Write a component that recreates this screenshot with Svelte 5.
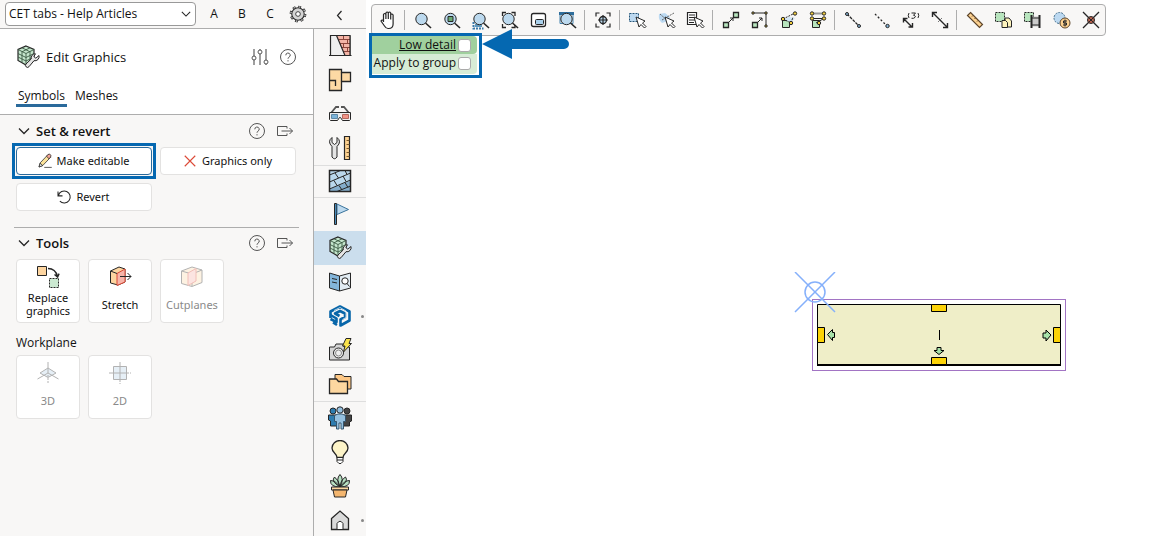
<script lang="ts">
	type RailItem = { icon: string; label: string; dot?: boolean };

	let lowDetail = $state(false);
	let applyToGroup = $state(false);
	let activeRail = $state('edit');

	const magnifier =
		'<path d="M14.500 15l5.500 5" stroke-width="1.600"/><circle cx="10.500" cy="11" r="5.700" fill="#bcd9ee"/>';
	const cursor =
		'<path d="M10 9l3 10 2-2.500 3.500 3.500 1.500-1.500-3.500-3.500 2.500-2z" fill="#fff"/>';

	const icons: Record<string, string> = {
		cog: '<circle cx="12" cy="12" r="8.500" stroke-width="3" stroke-dasharray="3.400 3.275"/><circle cx="12" cy="12" r="7.500" fill="#d4d4d4" stroke-width="1.300"/><circle cx="12" cy="12" r="8.600" stroke="#d4d4d4" stroke-width="1.400" stroke-dasharray="1.800 4.950" stroke-dashoffset="-.8"/><circle cx="12" cy="12" r="2.800" fill="#fff"/>',
		cube: '<path d="M10 1l8 3.500v11L10 20l-8-4.500v-11z" fill="#c5e6cd" stroke-width="1.200"/><path d="M2 4.500l8 4 8-4M10 8.500V20M6 2.800l8 4M14 2.800l-8 4M2 8.500l8 4 8-4M2 12l8 4 8-4M6 6.500v11M14 6.500v11" stroke="#3b5a43" stroke-width=".9"/><path d="M23 10.500a4.200 4.200 0 0 1-5 5.200l-5 6a2 2 0 0 1-3-2.700l5.200-5a4.200 4.200 0 0 1 4.300-5.200l-1.700 2.700 2 1.700z" fill="#e6e6e6"/>',
		sliders:
			'<path d="M6 4v16M12 4v16M18 4v16" stroke="#777" stroke-width="1.400"/><circle cx="6" cy="13" r="2" fill="#fff"/><circle cx="12" cy="7" r="2" fill="#fff"/><circle cx="18" cy="17" r="2" fill="#fff"/>',
		help: '<circle cx="12" cy="12" r="7.500"/><path d="M9.800 10.300a2.200 2.200 0 1 1 3.200 1.900c-.7.400-1 .8-1 1.500M12 15.200v1.200"/>',
		detach: '<path d="M14 9.500V7.500H4.500v9h9.500v-2M8.500 12h11M16.500 9l3 3-3 3"/>',
		chevron: '<path d="M7 9.500l5 5 5-5" stroke-width="1.300"/>',
		back: '<path d="M14.500 9l-4 4.500 4 4.500" stroke-width="1.200"/>',
		pencil:
			'<path d="M4 20l1.500-5.500L16 3.500l3.500 3.500L9 18z" fill="#fae29a"/><path d="M14 5.500l2-2q1.500-1.500 3.200 0t0 3.500l-2 2z" fill="#f3a597"/><path d="M4 20l1.500-5 3.500 3z" fill="#eee"/><path d="M11 20.500h10"/>',
		cross: '<path d="M5 5l14 14M19 5L5 19" stroke="#dc4a38" stroke-width="1.500"/>',
		revert: '<path d="M4 4.500v6h6M4.500 10a8 8 0 1 1 2 7.500" stroke-width="1.400"/>',
		replace:
			'<path d="M1.500 1.500h9v9h-9z" fill="#fdd5a0"/><path d="M13.500 13.500h9v9h-9z" fill="#cbe9d1" stroke-dasharray="2 1"/><path d="M12 3.500q7.500 0 9.500 8M18.500 9.500l3.100 2.600 1.500-3.500" stroke-width="1.400"/>',
		stretch:
			'<path d="M2.500 6L11 2l6 2v13l-7 3-7.500-2z" fill="#fdd5a0"/><path d="M9 8.500L17 4v13l-8 3.500z" fill="#f7b5aa" stroke="#d94834"/><path d="M2.500 6L9 8.500M12 11.500h11M19.500 8l3.500 3.500-3.500 3.500"/>',
		cutplanes:
			'<path d="M1.500 6L12 2l10 3v12.500L12 21.500l-10.500-3z" fill="#fbdcae"/><path d="M1.500 6l10.500 3 10-4M12 9v12"/><path d="M8 8l8-4.500V16l-8 4.500z" fill="#f7b5aa" stroke="#d94834"/>',
		plane3d:
			'<path d="M4 12l8-5 8 5-8 4.500z" fill="#b8d3e8"/><path d="M12 1v11M1.500 18L12 12l10.500 6"/><path d="M12 14v9" stroke-dasharray="2 1"/>',
		plane2d:
			'<path d="M5.500 5.500h13v13h-13z" fill="#b8d3e8"/><path d="M12 1v22M1 12h22" stroke-dasharray="17 1 2 1"/>',
		wall: '<path d="M2.500 1.500H22V21.500H2.500z" fill="#eee"/><path d="M8.500 1.500H22V21.500h-5z" fill="#f4b5a7" stroke="none"/><path d="M10.500 5.500H22M12 9.500h10M13.500 13.500H22M15.500 17.500H22M15.500 1.500v4M19.500 5.500v4M15.500 9.500v4M19.500 13.500v4" stroke="#8c453b"/><path d="M2.500 21.500v-20H22v20M8.500 1.500l8.500 20M1 21.500h22.500" stroke-width="1.200"/>',
		sofa: '<path d="M1.500 1.500h12v3h9v9h-9v9h-12z" fill="#fdd9a4" stroke-width="1.300"/><path d="M13.500 4.500v9M1.500 12.500h6V18" stroke-width="1.300"/>',
		glasses:
			'<path d="M3 11l5-6h3M21 11l-5-6h-3" stroke="#555" stroke-width="1.800"/><path d="M1.500 10.500h21v7l-1 1h-7l-2-3h-1l-2 3h-7l-1-1z" fill="#eee"/><path d="M3.500 12.500h6v4h-6z" fill="#7cb3d8" stroke="#5c87a5"/><path d="M14.500 12.500h6v4h-6z" fill="#f19488" stroke="#b3685e"/>',
		tools:
			'<path d="M4 1.500v5l2.500 2 2.500-2v-5q5 4 0 9V21q-2.500 3.500-5 0V10.500q-5-5 0-9z" fill="#e4e4e4"/><path d="M16.500 .5h5v23h-5z" fill="#fdd291" stroke-width="1.200"/><path d="M21.500 4.500h-3M21.500 8.500h-3M21.500 12.500h-3M21.500 16.500h-3M21.500 20.500h-3" stroke="#7b5a2c"/>',
		paving:
			'<path d="M1.500 1.500h21v21h-21z" fill="#bad8ed"/><path d="M2 20l20-8v10H2z" fill="#83accb" stroke="none"/><path d="M1.500 6l11-4.500M1.500 13l21-9M1.500 20l21-9M9 22.500l13.500-5.500M7 4l3.500 5M15 7l3 5.500M6 11.500l3 5M17 13.500l3 5M11 16.500l3 4.500M17 1.500l2 4"/><path d="M1.500 1.500h21v21h-21z" stroke-width="1.500"/>',
		flag: '<path d="M6.500 1.500h2v21h-2z" fill="#4889b7"/><path d="M9 2l11.500 5.500L9 12.500z" fill="#bcd9ee" stroke="#39739c"/>',
		catalog:
			'<path d="M1.500 3l10 3v15l-10-3z" fill="#83b5da"/><path d="M11.500 6l11-3v15l-11 3z" fill="#e2ecf3"/><path d="M4 8.500l5 1M4 12l5 1"/><circle cx="17" cy="11" r="3.200" fill="#fff"/><path d="M19 13.500l2.500 3"/>',
		sketch:
			'<g stroke="#0866a9" stroke-width="2.600" stroke-linejoin="round"><path d="M2.500 14V7.500L12 2.500l9.500 5v9L12.500 21.500v-6l4.500-2.500V9.500L12 7 7 9.500l4.500 2.500"/><path d="M2.500 11l6 3.500v3.500L2.500 15M5 18.500l4 2.500"/></g><path d="M6 6.500l6-3 6 3.500v6.500l-3.500 2" stroke="#fff" stroke-width=".7"/>',
		camera:
			'<path d="M1.500 9h5l1.500-3h7l1 3h5.500v13h-20z" fill="#d5d5d5"/><circle cx="10.500" cy="15" r="5" fill="#eee"/><circle cx="10.500" cy="15" r="3" stroke="#888"/><path d="M18 .5h5l-2 5h2.500l-8 8.500 1.500-6h-2.500z" fill="#fbe34b"/>',
		folders:
			'<path d="M7 7V2.500h7l2 2h7V17h-4" fill="#fdc785"/><path d="M1.500 7h7l2 2.500h9v12h-18z" fill="#fdd7a0" stroke-width="1.300"/>',
		people:
			'<circle cx="5" cy="5" r="3" fill="#2e7caf"/><circle cx="19" cy="5" r="3" fill="#444"/><path d="M.5 9h8v11h-6v-5l-2-1z" fill="#2e7caf"/><path d="M15.500 9h8v6l-2 1v4h-6z" fill="#444"/><circle cx="12" cy="4" r="3.200" fill="#95c0df"/><path d="M6.500 9.500L10 8h4l3.500 1.500v6h-2V23h-2.500v-6h-2v6H8.500v-7.500h-2z" fill="#95c0df" stroke="#35566f"/>',
		bulb: '<path d="M9 17.500c0-4-5-4.500-5-9.500a8 7.500 0 0 1 16 0c0 5-5 5.500-5 9.500z" fill="#fdf4c8" stroke-width="1.300"/><path d="M9 17.500h6v4l-2 2h-2l-2-2zM9 20h6" fill="#fff"/>',
		plant:
			'<path d="M12 13Q2 13 2.500 6.500q5 0 9.500 6.500Q2.500 7 6.500 3q4.500 3 5.500 10-4.500-8 0-12.500Q16.500 5 12 13q.5-7 5.500-10 3.500 4-5.500 10 4.500-6.500 9.500-6.500.5 6.500-9.500 6.500z" fill="#b6dfc1"/><path d="M3.500 13h17v3h-17z" fill="#fdd7a0"/><path d="M5 16h14l-1.500 7h-11z" fill="#f4b66f"/>',
		home: '<path d="M3.500 10.500L12 3l8.500 7.500V21.500h-17z" fill="#dadada" stroke-width="1.300"/><path d="M9 21.500v-6q3-4.500 6 0v6z" fill="#fff"/>',
		hand: '<path d="M7.500 14V6.500q1.200-2 2.400 0V11 5q1.200-2 2.400 0v6V5q1.200-2 2.400 0v6.500V7q1.200-2 2.400 0v9q0 4.500-4.500 4.500H12q-2 0-3.500-2.500L5 13q1-2 2.500 0z" fill="#fff" stroke-width="1.200"/>',
		zoom: magnifier,
		zoomSel: magnifier + '<path d="M8 8.500h5v5H8z" fill="#6bab74"/>',
		zoomArea:
			'<path d="M4.500 14v6.500h10" stroke="#397aaa" stroke-width="2" stroke-dasharray="2 1"/><path d="M6 16h7v3H6z" fill="#5f98be" stroke="none"/>' +
			magnifier,
		zoomFit:
			'<path d="M4.500 8V4.500H8M13.500 4.500H17V8M4.500 16v3.500H8M17 17v2.500h-3.500" stroke-width="1.300"/>' + magnifier,
		window:
			'<rect x="4.500" y="5.500" width="14" height="13" rx="2" stroke-width="1.300" fill="#fff"/><rect x="8.500" y="11.500" width="8" height="5" rx="1" fill="#a9d0eb"/>',
		zoomWindow:
			'<path d="M4 6v9.500h13V6" stroke="#4483af"/><path d="M3 5.500h15" stroke="#2f6e9c" stroke-width="3"/>' +
			magnifier,
		focus:
			'<path d="M5 8.500V5h3.500M15.500 5H19v3.500M19 15.500V19h-3.500M8.500 19H5v-3.500" stroke-width="1.200"/><circle cx="12" cy="12" r="3.500" fill="#b9d6ea" stroke-width="1.300"/><path d="M12 7v10M7 12h10" stroke-width="1.200"/>',
		select: '<path d="M3.500 5.500h9v8h-9z" fill="#bcd9f1" stroke="#24567a" stroke-dasharray="2 1"/>' + cursor,
		lasso:
			'<path d="M4 6l6-1 5 4-2 4-6 2q-4-3-3-9z" fill="#bcd9f1" stroke="none"/><path d="M5 6l9 8M7 12l12-7" stroke-dasharray="2 1" stroke="#666"/>' +
			cursor,
		list: '<path d="M3.500 4.500h9v12h-9z" fill="#fff" stroke-width="1.200"/><path d="M5 7h6M5 9.500h6M5 12h6M5 14.500h5"/>' + cursor,
		scale:
			'<path d="M4.500 14.500h5v5h-5zM14.500 4.500h5v5h-5z" fill="#b8e5be" stroke-width="1.300"/><path d="M10 14l4-4M11 10h3v3"/>',
		scaleLine:
			'<path d="M4.500 14.500h5v5h-5z" fill="#b8e5be" stroke-width="1.300"/><path d="M5 5h13v13M10 14l4-4M11 10h3v3"/><path d="M4 4h2v2H4zM17 4h2v2h-2zM17 17h2v2h-2z" fill="#f2cd3d"/>',
		snap: '<path d="M5.500 12.500h7v7h-7z" fill="#b8e5be"/><path d="M7 11l5-2 6 1-4 5z" fill="#d2e6f4" stroke="none"/><path d="M6 11l12-6M6 11l8 4 2-6" stroke-dasharray="2 1"/><circle cx="6" cy="11" r="1.700" fill="#f2cd3d"/><circle cx="18" cy="5.500" r="1.700" fill="#f2cd3d"/><circle cx="14" cy="15" r="1.700" fill="#f2cd3d"/>',
		snapGroup:
			'<path d="M6.500 12.500h7v7h-7z" fill="#b8e5be"/><path d="M6 5.500h12" stroke="#999" stroke-width="2"/><path d="M6 10.500h12M10 15l7-4"/><circle cx="6" cy="5.500" r="1.700" fill="#f2cd3d"/><circle cx="18" cy="5.500" r="1.700" fill="#f2cd3d"/><circle cx="6" cy="10.500" r="1.700" fill="#f2cd3d"/><circle cx="18" cy="10.500" r="1.700" fill="#f2cd3d"/><circle cx="13" cy="15" r="1.700" fill="#f2cd3d"/>',
		line: '<path d="M6 6l12 12" stroke-width="1.300" stroke-dasharray="3 1"/><circle cx="6" cy="6" r="1.500" fill="#85b4d7"/><circle cx="18" cy="18" r="1.500" fill="#85b4d7"/>',
		ray: '<path d="M5 6l12 12" stroke-width="1.300" stroke-dasharray="2 2"/><circle cx="17.500" cy="18" r="1.700" fill="#85b4d7"/>',
		measure3:
			'<path d="M5 11l8 8M4.500 14.500V10.500h4M13.500 15v4h-4" stroke-width="1.400"/><path d="M10 5q-1.500 2.500 0 5M19 5q1.500 2.500 0 5M12.500 5h4l-2 2.300q4 1 0 3h-2"/>',
		measure:
			'<path d="M5 5l14 14M4.500 9V4.500H9M19.500 15v4.500H15" stroke-width="1.400"/><path d="M10 14l4-4" stroke="#777"/>',
		ruler:
			'<path d="M7.500 4.500l12 12-3 3-12-12z" fill="#fdd291" stroke="#5d452a" stroke-width="1.200"/><path d="M10 7.500l-1 1M12.500 10l-1 1M15 12.500l-1 1" stroke="#5d452a"/>',
		copyPage:
			'<path d="M3.500 4.500h9v9h-9z" fill="#b8e5be" stroke-dasharray="2 1"/><path d="M13 10h4l2.500 3v6H13z" fill="#fdf3bc"/><path d="M10 12.500h3.500l2 2v5H10z" fill="#fdf3bc"/>',
		film: '<path d="M3.500 4.500h9v9h-9z" fill="#b8e5be" stroke-dasharray="2 1"/><path d="M10.500 8.500h8v10h-8z" fill="#ccc" stroke="none"/><path d="M10.500 7v13M18.500 7v13" stroke-width="2"/><path d="M10.500 10h8M10.500 17h8"/>',
		price:
			'<circle cx="9.500" cy="10" r="5.500" fill="#bcd9f1" stroke="#456f8d" stroke-dasharray="2 1"/><circle cx="15" cy="15" r="5" fill="#fdd291" stroke="#5d452a"/><path d="M17 13h-3.500v2h3v2H13M15 11.500v7"/>',
		burst: '<path d="M4 4l16 16M20 4L4 20" stroke-width="1.300"/><circle cx="12" cy="12" r="3.500" fill="#b9604c"/><path d="M9.500 9.500l5 5M14.500 9.500l-5 5"/>'
	};

	const toolbar = [
		['hand'],
		['zoom', 'zoomSel', 'zoomArea', 'zoomFit', 'window', 'zoomWindow'],
		['focus'],
		['select', 'lasso', 'list'],
		['scale', 'scaleLine', 'snap', 'snapGroup'],
		['line', 'ray', 'measure3', 'measure'],
		['ruler', 'copyPage', 'film', 'price', 'burst']
	];

	const rail: RailItem[][] = [
		[
			{ icon: 'wall', label: 'Walls' },
			{ icon: 'sofa', label: 'Furniture' },
			{ icon: 'glasses', label: '3D view' },
			{ icon: 'tools', label: 'Utilities' }
		],
		[{ icon: 'paving', label: 'Materials' }],
		[
			{ icon: 'flag', label: 'Flags' },
			{ icon: 'edit', label: 'Edit Graphics' },
			{ icon: 'catalog', label: 'Catalogues' },
			{ icon: 'sketch', label: 'SketchUp', dot: true },
			{ icon: 'camera', label: 'Renderings' }
		],
		[{ icon: 'folders', label: 'Files' }],
		[
			{ icon: 'people', label: 'People' },
			{ icon: 'bulb', label: 'Lighting' },
			{ icon: 'plant', label: 'Plants' },
			{ icon: 'home', label: 'Home', dot: true }
		]
	];
</script>

{#snippet icon(name: string, size: number = 24)}
	<svg class="icon" viewBox="0 0 24 24" width={size} height={size} aria-hidden="true">
		{@html icons[name]}
	</svg>
{/snippet}

{#snippet sectionHead(title: string)}
	<header class="section-head">
		<button class="plain fold" aria-label="Collapse {title}">{@render icon('chevron')}</button>
		<h2>{title}</h2>
		<button class="plain soft" aria-label="Help">{@render icon('help')}</button>
		<button class="plain soft" aria-label="Detach">{@render icon('detach')}</button>
	</header>
{/snippet}

<div class="app">
	<aside class="side">
		<div class="topbar">
			<div class="picker">
				<select aria-label="Tab set">
					<option>CET tabs - Help Articles</option>
				</select>
				{@render icon('chevron', 20)}
			</div>
			<button class="plain letter">A</button>
			<button class="plain letter">B</button>
			<button class="plain letter">C</button>
			<button class="plain letter" aria-label="Settings">{@render icon('cog', 20)}</button>
			<button class="plain collapse" aria-label="Collapse panel">{@render icon('back')}</button>
		</div>

		<div class="side-body">
			<div class="panel">
				<div class="panel-head">
					<div class="title-row">
						{@render icon('cube')}
						<h1>Edit Graphics</h1>
						<button class="plain soft" aria-label="Options">{@render icon('sliders')}</button>
						<button class="plain soft" aria-label="Help">{@render icon('help')}</button>
					</div>
					<nav class="tabs">
						<a class="tab active" href="#symbols">Symbols</a>
						<a class="tab" href="#meshes">Meshes</a>
					</nav>
				</div>

				<section>
					{@render sectionHead('Set & revert')}
					<div class="wide-grid">
						<div class="marked">
							<button class="tool wide focused">{@render icon('pencil', 18)}Make editable</button>
						</div>
						<button class="tool wide">{@render icon('cross', 18)}Graphics only</button>
						<button class="tool wide">{@render icon('revert', 18)}Revert</button>
					</div>
				</section>

				<section>
					{@render sectionHead('Tools')}
					<div class="tiles">
						<button class="tool tile">{@render icon('replace')}<span>Replace graphics</span></button>
						<button class="tool tile">{@render icon('stretch')}<span>Stretch</span></button>
						<button class="tool tile" disabled>{@render icon('cutplanes')}<span>Cutplanes</span></button>
					</div>
					<h3>Workplane</h3>
					<div class="tiles">
						<button class="tool tile" disabled>{@render icon('plane3d')}<span>3D</span></button>
						<button class="tool tile" disabled>{@render icon('plane2d')}<span>2D</span></button>
					</div>
				</section>
			</div>

			<nav class="rail">
				{#each rail as group, i}
					<div class="rail-group" class:tight={i === 1}>
						{#each group as item}
							<button
								class="plain rail-item"
								class:active={activeRail === item.icon}
								class:dot={item.dot}
								aria-label={item.label}
								onclick={() => (activeRail = item.icon)}
							>
								{@render icon(item.icon === 'edit' ? 'cube' : item.icon)}
							</button>
						{/each}
					</div>
				{/each}
			</nav>
		</div>
	</aside>

	<main class="canvas">
		<div class="toolbar">
			{#each toolbar as group}
				<div class="tool-group">
					{#each group as name}
						<button class="plain tool-button" aria-label={name}>{@render icon(name)}</button>
					{/each}
				</div>
			{/each}
		</div>

		<div class="options">
			<label class="option strong">
				<span>Low detail</span>
				<input type="checkbox" bind:checked={lowDetail} />
			</label>
			<label class="option">
				<span>Apply to group</span>
				<input type="checkbox" bind:checked={applyToGroup} />
			</label>
		</div>

		<svg class="pointer" viewBox="0 0 88 32" width="88" height="32" aria-hidden="true">
			<path d="M0 16L30 1v10h52a5 5 0 0 1 0 10H30v10z" fill="#0568b1" />
		</svg>

		<!-- symbol in plan view, with its insertion point and connectors -->
		<svg class="drawing" viewBox="0 0 274 102" width="274" height="102" aria-hidden="true">
			<rect x="18.500" y="27.500" width="253" height="71" fill="#fff" stroke="#a274c4" />
			<path d="M23.500 32.500h243v61h-243z" fill="#efeec8" stroke="#000" />
			<path d="M23 93h244" stroke="#000" stroke-width="2" />
			<g fill="#fcd307" stroke="#000">
				<path d="M137.500 32.500h15v7h-15zM137.500 85.500h15v7h-15z" />
				<path d="M23.500 55.500h7v15h-7zM259.500 55.500h7v15h-7z" />
			</g>
			<path d="M145.500 58v10" stroke="#000" />
			<g fill="#a8e2a9" stroke="#000">
				<path d="M33.500 62.500l5-5v3h2v5h-2v3z" />
				<path d="M257 63l-5-5v3h-3v5h3v3z" />
				<path d="M145 82.500l-5-4h3v-3h4v3h3z" />
			</g>
			<g fill="none" stroke="#85b0fb" stroke-width="1.500">
				<circle cx="21" cy="20" r="10" />
				<path d="M1 0l40 40M41 0L1 40" />
			</g>
		</svg>
	</main>
</div>

<style>
	:global(body) {
		margin: 0;
		overflow: hidden;
	}

	.app {
		display: flex;
		height: 100vh;
		overflow: hidden;
		font-family: 'Open Sans', 'Noto Sans', sans-serif;
		font-size: 12px;
		line-height: 16px;
		color: #111;
		background: #fff;
	}

	h1,
	h2,
	h3 {
		margin: 0;
		font-weight: 400;
	}

	.icon {
		display: block;
		flex: none;
		fill: none;
		stroke: #262626;
	}

	.plain {
		display: flex;
		align-items: center;
		justify-content: center;
		padding: 0;
		border: 0;
		background: none;
		font: inherit;
		color: inherit;
	}

	.soft .icon {
		stroke: #555;
	}

	/* left side */
	.side {
		display: flex;
		flex-direction: column;
		flex: none;
		width: 366px;
		background: #f8f7f6;
	}

	.topbar {
		display: flex;
		align-items: center;
		flex: none;
		height: 28px;
		padding-left: 5px;
		border-bottom: 1px solid #adadad;
	}

	.picker {
		display: grid;
		align-items: center;
		width: 191px;
		margin-right: 4px;
	}

	.picker select,
	.picker > :global(.icon) {
		grid-area: 1 / 1;
	}

	.picker select {
		appearance: none;
		height: 24px;
		padding: 0 24px 0 3px;
		border: 1px solid #999;
		border-radius: 4px;
		background: #fff;
		font: inherit;
		color: inherit;
	}

	.picker > :global(.icon) {
		justify-self: end;
		pointer-events: none;
	}

	.letter {
		width: 28px;
		height: 24px;
	}

	.collapse {
		flex: 1;
	}

	.side-body {
		display: flex;
		flex: 1;
		min-height: 0;
	}

	.panel {
		flex: 1;
		border-right: 1px solid #adadad;
	}

	.panel-head {
		background: #fff;
		border-bottom: 1px solid #adadad;
	}

	.title-row {
		display: flex;
		align-items: center;
		gap: 4px;
		height: 56px;
		padding: 0 13px 0 16px;
	}

	h1 {
		flex: 1;
		padding-left: 2px;
		font-size: 13px;
	}

	.tabs {
		display: flex;
		gap: 6px;
		height: 29px;
		padding-left: 16px;
	}

	.tab {
		height: 16px;
		padding: 3px 2px 0;
		color: inherit;
		text-decoration: none;
	}

	.tab.active {
		border-bottom: 3px solid #2a6a9b;
	}

	section {
		margin: 0 14px;
		padding: 0 2px 16px;
		border-top: 1px solid #adadad;
	}

	.panel-head + section {
		border-top: 0;
		padding-top: 1px;
	}

	.section-head {
		display: flex;
		align-items: center;
		gap: 4px;
		height: 29px;
		margin-bottom: 2px;
	}

	.section-head .fold {
		width: 16px;
	}

	h2 {
		flex: 1;
		font-size: 13px;
		font-weight: 600;
	}

	.wide-grid {
		display: grid;
		grid-template-columns: 136px 136px;
		gap: 8px;
	}

	.tool {
		display: flex;
		align-items: center;
		justify-content: center;
		border: 1px solid #e3e2e1;
		border-radius: 4px;
		background: #fff;
		font-family: 'Noto Sans', sans-serif;
		font-size: 11px;
		line-height: 13px;
		color: #111;
	}

	.tool:disabled {
		color: #8a8a8a;
	}

	.tool:disabled :global(.icon) {
		opacity: 0.35;
	}

	.wide {
		gap: 3px;
		width: 136px;
		height: 28px;
		padding: 0 3px 1px 0;
	}

	.focused {
		border-color: #2a6a9b;
	}

	.marked {
		outline: 3px solid #0568b1;
		outline-offset: 1px;
	}

	.tiles {
		display: flex;
		gap: 8px;
	}

	.tile {
		flex-direction: column;
		width: 64px;
		height: 64px;
		padding: 5px 4px 3px;
	}

	.tile span {
		display: grid;
		place-items: center;
		flex: 1;
	}

	h3 {
		padding: 12px 0 4px;
		font-size: 12px;
	}

	.rail {
		width: 52px;
	}

	.rail-group + .rail-group {
		box-shadow: inset 0 1px #dedede;
	}

	.rail-item {
		position: relative;
		width: 100%;
		height: 34px;
	}

	.tight .rail-item {
		height: 32px;
	}

	.rail-item.active {
		background: #cbdeed;
	}

	.dot::after {
		content: '';
		position: absolute;
		right: 2px;
		top: 16px;
		width: 3px;
		height: 3px;
		border-radius: 50%;
		background: #888;
	}

	/* drawing area */
	.canvas {
		position: relative;
		flex: 1;
		min-width: 0;
		padding: 4px 0 0 5px;
	}

	.toolbar {
		display: flex;
		align-items: center;
		box-sizing: border-box;
		width: max-content;
		height: 32px;
		padding-left: 1px;
		border: 1px solid #adadad;
		border-radius: 4px;
		background: #f8f7f6;
	}

	.tool-group {
		display: flex;
	}

	.tool-group + .tool-group {
		margin-left: 2px;
		padding-left: 3px;
		border-left: 1px solid #adadad;
	}

	.tool-button {
		width: 29px;
		height: 20px;
	}

	/* floats over the canvas and the lower edge of the toolbar */
	.options {
		position: absolute;
		left: 3px;
		top: 33px;
		box-sizing: border-box;
		width: 113px;
		padding-bottom: 1px;
		border: 3px solid #0568b1;
		background: #fff;
	}

	.option {
		display: flex;
		align-items: center;
		justify-content: flex-end;
		gap: 2px;
		height: 18px;
		padding: 0 6px 2px 0;
		margin-right: 2px;
		border-radius: 0 0 4px 0;
		background: #d7ecd6;
		white-space: nowrap;
	}

	.option.strong {
		padding-bottom: 0;
		border-radius: 0 4px 4px 0;
		background: #a0d09e;
		text-decoration: underline;
	}

	.option input {
		appearance: none;
		box-sizing: border-box;
		flex: none;
		width: 13px;
		height: 13px;
		margin: 0;
		border: 1px solid #aaa;
		border-radius: 3px;
		background: #fff;
	}

	.option input:checked {
		background: #2a6a9b;
	}

	.pointer {
		position: absolute;
		left: 116px;
		top: 28px;
	}

	.drawing {
		position: absolute;
		left: 428px;
		top: 272px;
	}
</style>
